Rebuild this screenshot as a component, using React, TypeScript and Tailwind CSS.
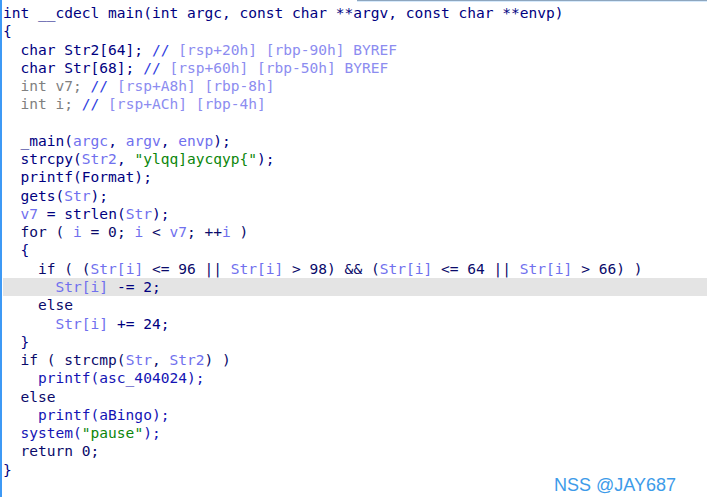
import React from "react";

type Seg = [string, string];

const N = "text-[#000080]";
const K = "text-[#0a0a6a]";
const F = "text-[#1414b4]";
const V = "text-[#7070ee]";
const G = "text-[#808080]";
const C = "text-[#2e3ce0]";
const CT = "text-[#8c8cf0]";
const S = "text-[#0b860b]";

const lines: Seg[][] = [
  [[N, "int __cdecl main(int argc, const char **argv, const char **envp)"]],
  [[N, "{"]],
  [[N, "  char Str2[64]; "], [C, "// "], [CT, "[rsp+20h] [rbp-90h] BYREF"]],
  [[N, "  char Str[68]; "], [C, "// "], [CT, "[rsp+60h] [rbp-50h] BYREF"]],
  [[G, "  int v7; "], [C, "// "], [CT, "[rsp+A8h] [rbp-8h]"]],
  [[G, "  int i; "], [C, "// "], [CT, "[rsp+ACh] [rbp-4h]"]],
  [[N, ""]],
  [[N, "  _main("], [V, "argc"], [N, ", "], [V, "argv"], [N, ", "], [V, "envp"], [N, ");"]],
  [[N, "  strcpy("], [V, "Str2"], [N, ", "], [S, "\"ylqq]aycqyp{\""], [N, ");"]],
  [[N, "  printf(Format);"]],
  [[N, "  gets("], [V, "Str"], [N, ");"]],
  [[N, "  "], [V, "v7"], [N, " = strlen("], [V, "Str"], [N, ");"]],
  [[K, "  for ( "], [V, "i"], [K, " = 0; "], [V, "i"], [K, " < "], [V, "v7"], [K, "; ++"], [V, "i"], [K, " )"]],
  [[N, "  {"]],
  [
    [K, "    if ( ("],
    [V, "Str[i]"],
    [K, " <= 96 || "],
    [V, "Str[i]"],
    [K, " > 98) && ("],
    [V, "Str[i]"],
    [K, " <= 64 || "],
    [V, "Str[i]"],
    [K, " > 66) )"],
  ],
  [[N, "      "], [V, "Str[i]"], [N, " -= 2;"]],
  [[K, "    else"]],
  [[N, "      "], [V, "Str[i]"], [N, " += 24;"]],
  [[N, "  }"]],
  [[K, "  if ( strcmp("], [V, "Str"], [K, ", "], [V, "Str2"], [K, ") )"]],
  [[F, "    printf(asc_404024);"]],
  [[K, "  else"]],
  [[F, "    printf(aBingo);"]],
  [[F, "  system("], [S, "\"pause\""], [F, ");"]],
  [[K, "  return 0;"]],
  [[N, "}"]],
];

const App = () => {
  return (
    <div className="relative w-[707px] h-[497px] bg-white overflow-hidden border-l-2 border-[#3d99f5]">
      <div className="absolute top-0 left-[355px] right-0 h-[2px] border-t border-[#8ea6be] bg-[#d6eafc]"></div>
      <div
        className="pt-[4px] pl-[1px] whitespace-pre text-[14.55px]"
        style={{ fontFamily: '"DejaVu Sans Mono", "Liberation Mono", monospace' }}
      >
        {lines.map((segs, i) => (
          <div
            key={i}
            className={`h-[18.28px] leading-[18.28px] ${i === 15 ? "bg-[#e4e4e4]" : ""}`}
          >
            {segs.map(([cls, txt], j) => (
              <span key={j} className={cls}>
                {txt}
              </span>
            ))}
          </div>
        ))}
      </div>
      <div
        className="absolute left-[552px] top-[475px] text-[18px] leading-[20px] text-[#3d9be9]"
        style={{ fontFamily: '"Liberation Sans", Arial, sans-serif' }}
      >
        NSS @JAY687
      </div>
    </div>
  );
};

export default App;
